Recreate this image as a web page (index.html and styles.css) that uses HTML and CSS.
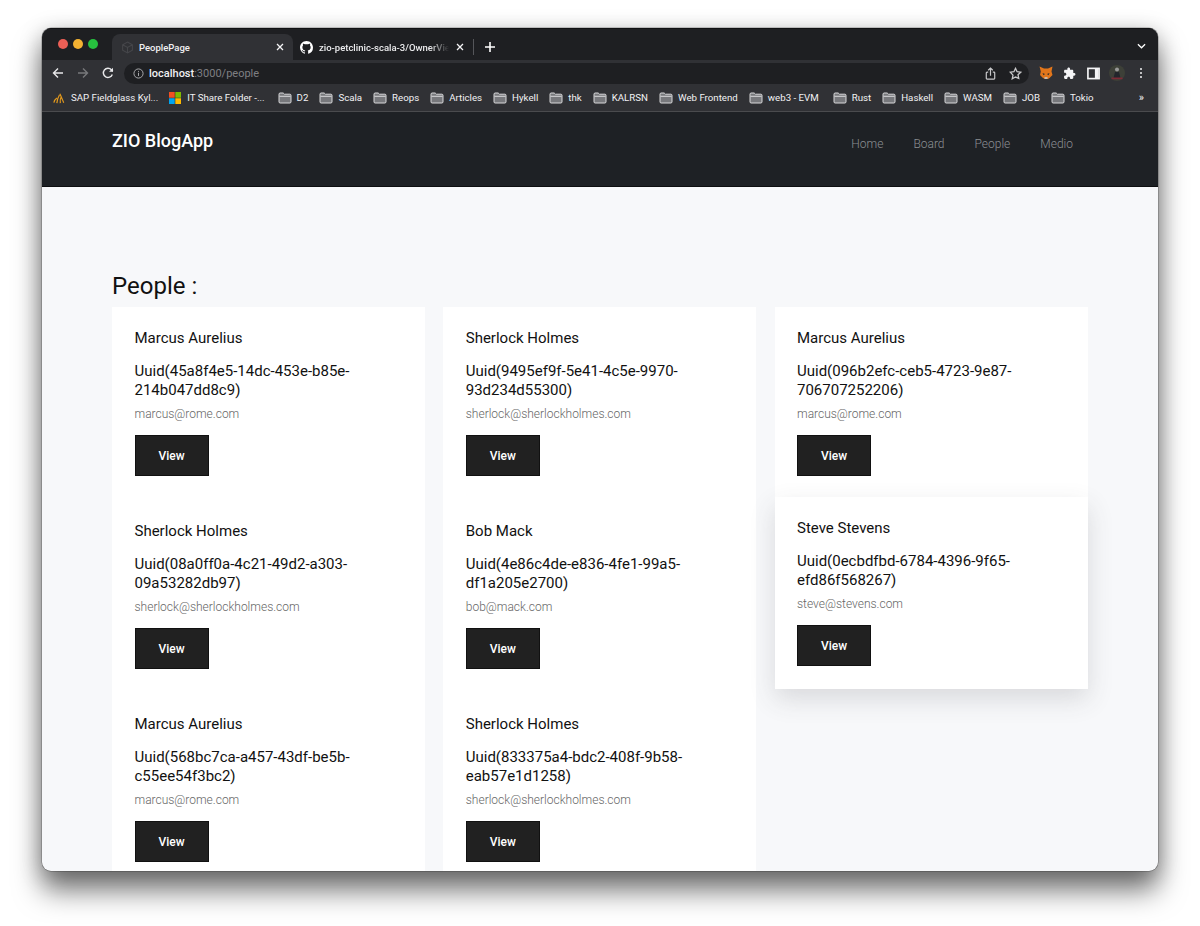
FILE: index.html
```html
<!DOCTYPE html>
<html lang="en">
<head>
<meta charset="utf-8">
<title>PeoplePage</title>
<link rel="stylesheet" href="styles.css">
</head>
<body>
<svg class="defs" width="0" height="0" aria-hidden="true">
  <symbol id="folder" viewBox="0 0 14 12">
    <path d="M1 2.200C1 1.500 1.400 1 2.100 1h3.100l1.200 1.200h5.500c.7 0 1.100.4 1.100 1.100v6.600c0 .7-.4 1.100-1.100 1.100H2.100C1.400 11 1 10.600 1 9.900z" fill="#77787c" stroke="#d9d9db" stroke-width="1"/>
    <path d="M1.500 4.300h11" stroke="#d9d9db" stroke-width="1"/>
  </symbol>
  <symbol id="close" viewBox="0 0 8 8">
    <path d="M1 1l6 6M7 1L1 7" stroke="#f4f4f6" stroke-width="1.300"/>
  </symbol>
</svg>
<div class="window">
  <div class="tabstrip">
    <div class="lights"><span class="light red"></span><span class="light yellow"></span><span class="light green"></span></div>
    <div class="tab active">
      <svg class="favicon" viewBox="0 0 12 12"><path d="M6 1l4.500 2.500v5L6 11 1.500 8.500v-5zM1.500 3.500L6 6l4.500-2.500M6 6v5" fill="none" stroke="#45464a" stroke-width="1"/></svg>
      <span class="tab-title">PeoplePage</span>
      <svg class="tab-close"><use href="#close"/></svg>
    </div>
    <div class="tab">
      <svg class="favicon gh" viewBox="0 0 16 16"><path fill="#fff" d="M8 0C3.580 0 0 3.580 0 8c0 3.540 2.290 6.530 5.470 7.590.4.070.55-.17.55-.38 0-.19-.01-.82-.01-1.490-2.010.37-2.530-.49-2.690-.94-.09-.23-.48-.94-.82-1.130-.28-.15-.68-.52-.01-.53.63-.01 1.080.58 1.230.82.720 1.210 1.870.87 2.330.66.070-.52.280-.87.510-1.070-1.780-.2-3.640-.89-3.640-3.950 0-.87.310-1.590.820-2.150-.08-.2-.36-1.020.08-2.120 0 0 .67-.21 2.200.82.640-.18 1.320-.27 2-.27s1.360.09 2 .27c1.530-1.040 2.200-.82 2.200-.82.440 1.100.16 1.920.08 2.120.51.560.82 1.270.82 2.150 0 3.070-1.870 3.750-3.650 3.950.29.25.54.73.54 1.480 0 1.070-.01 1.930-.01 2.200 0 .21.150.46.550.38A8.010 8.010 0 0 0 16 8c0-4.420-3.580-8-8-8z"/></svg>
      <span class="tab-title fade">zio-petclinic-scala-3/OwnerView</span>
      <svg class="tab-close"><use href="#close"/></svg>
    </div>
    <span class="tab-sep"></span>
    <svg class="plus" viewBox="0 0 10 10"><path d="M5 0v10M0 5h10" stroke="#fff" stroke-width="1.600"/></svg>
    <svg class="chev" viewBox="0 0 10 6"><path d="M1 1l4 4 4-4" fill="none" stroke="#fff" stroke-width="1.400"/></svg>
  </div>
  <div class="toolbar">
    <svg class="nav-ic" viewBox="0 0 12 12"><path d="M11 6H1.500M6 1.500L1.500 6 6 10.500" fill="none" stroke="#e8e8ea" stroke-width="1.400"/></svg>
    <svg class="nav-ic" viewBox="0 0 12 12"><path d="M1 6h9.500M6 1.500L10.500 6 6 10.500" fill="none" stroke="#77787b" stroke-width="1.400"/></svg>
    <svg class="nav-ic" viewBox="0 0 12 12"><path d="M10.300 7.500A4.600 4.600 0 1 1 9.400 2.800L10.800 4.200" fill="none" stroke="#e8e8ea" stroke-width="1.400"/><path d="M11 .8v4H7z" fill="#e8e8ea"/></svg>
    <div class="omnibox">
      <svg class="info" viewBox="0 0 12 12"><circle cx="6" cy="6" r="5" fill="none" stroke="#b5b6b8" stroke-width="1"/><path d="M6 5.200v3.500M6 3.200v1" stroke="#b5b6b8" stroke-width="1"/></svg>
      <span class="url"><b>localhost</b>:3000/people</span>
      <svg class="omni-ic share" viewBox="0 0 12 14"><path d="M3.500 5.500H2.200c-.5 0-.8.3-.8.8v6c0 .5.3.8.8.8h7.600c.5 0 .8-.3.8-.8v-6c0-.5-.3-.8-.8-.8H8.500M6 9.500V1.200M3.500 3.500L6 1l2.500 2.500" fill="none" stroke="#c8c8ca" stroke-width="1.300"/></svg>
      <svg class="omni-ic star" viewBox="0 0 14 14"><path d="M7 1.500l1.700 3.600 3.900.5-2.900 2.700.8 3.900L7 10.800l-3.500 1.900.8-3.900L1.400 5.600l3.900-.5z" fill="none" stroke="#c8c8ca" stroke-width="1.400"/></svg>
    </div>
    <div class="ext">
      <svg class="ext-ic fox" viewBox="0 0 14 14"><path d="M.5.5l4.500 2h4l4.500-2-1 5 1 3.500-3 3-1.500 1h-3L4 12 1 9l.8-3.500z" fill="#e2761b"/><path d="M3.500 7l2.500 1-1.500 1.200zM10.500 7L8 8l1.500 1.200z" fill="#2d2d2d"/><path d="M5.500 11h3v2h-3z" fill="#c9b8a8"/></svg>
      <svg class="ext-ic" viewBox="0 0 24 24"><path fill="#f4f4f6" d="M20.500 11H19V7c0-1.100-.9-2-2-2h-4V3.500C13 2.120 11.880 1 10.500 1S8 2.120 8 3.500V5H4c-1.100 0-1.990.9-1.990 2v3.800H3.500c1.490 0 2.700 1.210 2.700 2.700s-1.210 2.700-2.700 2.700H2V20c0 1.100.9 2 2 2h3.800v-1.500c0-1.490 1.210-2.700 2.700-2.700 1.490 0 2.700 1.210 2.700 2.700V22H17c1.100 0 2-.9 2-2v-4h1.500c1.380 0 2.500-1.120 2.500-2.500S21.880 11 20.500 11z"/></svg>
      <svg class="ext-ic" viewBox="0 0 14 14"><rect x="1" y="1.500" width="12" height="11" fill="none" stroke="#f4f4f6" stroke-width="1.800"/><rect x="8.500" y="2" width="4" height="10" fill="#f4f4f6"/></svg>
      <svg class="avatar" viewBox="0 0 16 16"><circle cx="8" cy="8" r="8" fill="#3d4038"/><circle cx="8" cy="4.500" r="2" fill="#999"/><path d="M4.500 13l1.500-6h4l1.500 6z" fill="#23252b"/><path d="M2.500 12.500h11v1.800h-11z" fill="#7d2b36"/></svg>
      <span class="kebab"><i></i><i></i><i></i></span>
    </div>
  </div>
  <div class="bookmarks">
    <div class="bm first">
      <svg class="bm-logo" viewBox="0 0 14 14"><path d="M1 12.500C1.500 10 3 8 4.500 7M4.500 13C5 9 6 6 7.500 3.500M8.500 13C8.200 10 8.400 7.500 9.500 6M12.500 12.500C11 9 9.500 5 8 2" fill="none" stroke="#e59a1c" stroke-width="1.400"/></svg>
      <span>SAP Fieldglass Kyl...</span>
    </div>
    <div class="bm second">
      <svg class="bm-logo" viewBox="0 0 12 12"><path fill="#f25022" d="M0 0h5.700v5.700H0z"/><path fill="#7fba00" d="M6.300 0H12v5.700H6.300z"/><path fill="#00a4ef" d="M0 6.300h5.700V12H0z"/><path fill="#ffb900" d="M6.300 6.300H12V12H6.300z"/></svg>
      <span>IT Share Folder -...</span>
    </div>
    <div class="bm"><svg class="folder"><use href="#folder"/></svg><span>D2</span></div>
    <div class="bm"><svg class="folder"><use href="#folder"/></svg><span>Scala</span></div>
    <div class="bm"><svg class="folder"><use href="#folder"/></svg><span>Reops</span></div>
    <div class="bm"><svg class="folder"><use href="#folder"/></svg><span>Articles</span></div>
    <div class="bm"><svg class="folder"><use href="#folder"/></svg><span>Hykell</span></div>
    <div class="bm"><svg class="folder"><use href="#folder"/></svg><span>thk</span></div>
    <div class="bm"><svg class="folder"><use href="#folder"/></svg><span>KALRSN</span></div>
    <div class="bm"><svg class="folder"><use href="#folder"/></svg><span>Web Frontend</span></div>
    <div class="bm wide"><svg class="folder"><use href="#folder"/></svg><span>web3 - EVM</span></div>
    <div class="bm"><svg class="folder"><use href="#folder"/></svg><span>Rust</span></div>
    <div class="bm"><svg class="folder"><use href="#folder"/></svg><span>Haskell</span></div>
    <div class="bm"><svg class="folder"><use href="#folder"/></svg><span>WASM</span></div>
    <div class="bm"><svg class="folder"><use href="#folder"/></svg><span>JOB</span></div>
    <div class="bm"><svg class="folder"><use href="#folder"/></svg><span>Tokio</span></div>
    <span class="more">»</span>
  </div>
  <header class="site-nav">
    <a class="brand">ZIO BlogApp</a>
    <nav class="links"><a>Home</a><a>Board</a><a>People</a><a>Medio</a></nav>
  </header>
  <main class="content">
    <h1 class="title">People :</h1>
    <div class="grid">
      <div class="col">
        <article class="card"><h3>Marcus Aurelius</h3><p class="id">Uuid(45a8f4e5-14dc-453e-b85e-214b047dd8c9)</p><p class="mail">marcus@rome.com</p><a class="btn">View</a></article>
        <article class="card"><h3>Sherlock Holmes</h3><p class="id">Uuid(08a0ff0a-4c21-49d2-a303-09a53282db97)</p><p class="mail">sherlock@sherlockholmes.com</p><a class="btn">View</a></article>
        <article class="card"><h3>Marcus Aurelius</h3><p class="id">Uuid(568bc7ca-a457-43df-be5b-c55ee54f3bc2)</p><p class="mail">marcus@rome.com</p><a class="btn">View</a></article>
      </div>
      <div class="col">
        <article class="card"><h3>Sherlock Holmes</h3><p class="id">Uuid(9495ef9f-5e41-4c5e-9970-93d234d55300)</p><p class="mail">sherlock@sherlockholmes.com</p><a class="btn">View</a></article>
        <article class="card"><h3>Bob Mack</h3><p class="id">Uuid(4e86c4de-e836-4fe1-99a5-df1a205e2700)</p><p class="mail">bob@mack.com</p><a class="btn">View</a></article>
        <article class="card"><h3>Sherlock Holmes</h3><p class="id">Uuid(833375a4-bdc2-408f-9b58-eab57e1d1258)</p><p class="mail">sherlock@sherlockholmes.com</p><a class="btn">View</a></article>
      </div>
      <div class="col">
        <article class="card"><h3>Marcus Aurelius</h3><p class="id">Uuid(096b2efc-ceb5-4723-9e87-706707252206)</p><p class="mail">marcus@rome.com</p><a class="btn">View</a></article>
        <article class="card hover"><h3>Steve Stevens</h3><p class="id">Uuid(0ecbdfbd-6784-4396-9f65-efd86f568267)</p><p class="mail">steve@stevens.com</p><a class="btn">View</a></article>
      </div>
    </div>
  </main>
</div>
</body>
</html>
```
FILE: styles.css
```css
* { box-sizing: border-box; }
html, body { margin: 0; height: 926px; overflow: hidden; }
body { background: #fff; padding: 28px 42px 0; font-family: Roboto, "Liberation Sans", sans-serif; }
.defs { display: block; height: 0; }

.window {
  height: 843px;
  border-radius: 9px;
  overflow: hidden;
  display: flex;
  flex-direction: column;
  background: #f7f8fa;
  box-shadow: 0 0 0 .5px rgba(0,0,0,.35), 0 20px 28px rgba(0,0,0,.5), 0 4px 22px rgba(0,0,0,.26);
}

.tabstrip { height: 32px; flex: none; background: #1e1f22; display: flex; align-items: flex-end; position: relative; border-top: 1px solid #101113; }
.lights { width: 70px; height: 31px; flex: none; display: flex; align-items: center; gap: 5.300px; padding: 0 0 2px 15.500px; }
.light { width: 10px; height: 10px; border-radius: 50%; }
.red { background: #ec5f56; }
.yellow { background: #f4b232; }
.green { background: #27c13f; }
.tab { width: 181px; height: 26px; flex: none; display: flex; align-items: center; padding: 0 9px; border-radius: 8px 8px 0 0; font-size: 9.500px; font-weight: 500; color: #f0f0f2; }
.tab.active { background: #303135; }
.tab + .tab { width: 180px; padding-left: 7px; }
.favicon { width: 13px; height: 13px; flex: none; margin-right: 5px; }
.gh { margin-right: 6px; }
.tab-title { flex: 1; min-width: 0; white-space: nowrap; overflow: hidden; }
.fade { color: #ececee; -webkit-mask-image: linear-gradient(90deg,#000 85%,transparent); mask-image: linear-gradient(90deg,#000 85%,transparent); }
.tab-close { width: 8px; height: 8px; flex: none; margin-left: 7px; }
.tab-sep { width: 1px; height: 16px; background: #55565a; margin: 0 0 5px 0; flex: none; }
.plus { width: 10px; height: 10px; margin: 0 0 8px 11px; flex: none; }
.chev { width: 9px; height: 6px; margin: 0 12px 11px auto; flex: none; }

.toolbar { height: 26px; flex: none; background: #303135; display: flex; align-items: center; padding: 0 0 0 10px; }
.nav-ic { width: 12px; height: 12px; flex: none; margin-right: 13px; }
.nav-ic:nth-of-type(3) { margin-right: 10px; }
.omnibox { width: 905px; height: 21px; flex: none; border-radius: 11px; background: #1e1f22; display: flex; align-items: center; padding: 0 7px 0 9px; }
.info { width: 11px; height: 11px; flex: none; margin-right: 5px; }
.url { flex: 1; font-size: 11px; font-weight: 400; color: #7e7f83; }
.url b { font-weight: 500; color: #f0f0f2; }
.omni-ic { flex: none; }
.share { width: 11px; height: 13px; margin-right: 13px; }
.star { width: 13px; height: 13px; }
.ext { display: flex; align-items: center; margin-left: 10px; }
.ext-ic { width: 13px; height: 13px; flex: none; margin-right: 11px; }
.fox { width: 14px; height: 14px; margin-right: 10px; }
.avatar { width: 16px; height: 16px; flex: none; margin-right: 15px; margin-left: -2px; }
.kebab { display: flex; flex-direction: column; gap: 2px; }
.kebab i { width: 2px; height: 2px; background: #f0f0f2; border-radius: 50%; display: block; }

.bookmarks { height: 26px; flex: none; background: #303135; border-bottom: 1px solid #4a4b4e; display: flex; align-items: center; padding: 0 0 2px 11px; font-size: 9.700px; font-weight: 450; color: #f2f2f4; position: relative; }
.bm { display: flex; align-items: center; flex: none; margin-right: 11px; white-space: nowrap; }
.bm-logo { width: 12px; height: 12px; flex: none; margin-right: 6px; }
.first { margin-right: 11px; }
.second { margin-right: 13px; }
.wide { margin-right: 14px; }
.folder { width: 14px; height: 12px; flex: none; margin-right: 5px; }
.more { margin-left: auto; margin-right: 14px; font-size: 11px; }

.site-nav { height: 75px; flex: none; background: #1e2125; display: flex; justify-content: space-between; padding: 0 70px; border-bottom: 1px solid #0d0e10; }
.brand { font-size: 18px; font-weight: 500; color: #fff; padding-top: 18px; }
.links { display: flex; gap: 30px; font-size: 12px; font-weight: 300; color: #8c8f93; padding: 25px 15px 0 0; }

.content { flex: 1; min-height: 0; overflow: hidden; padding: 85px 70px 0; }
.title { margin: 0 0 7px; font-size: 24px; line-height: 28px; font-weight: 400; color: #111; }
.grid { display: grid; grid-template-columns: repeat(3, 313px); column-gap: 18.250px; align-items: start; }
.col { display: flex; flex-direction: column; }
.card { height: 193px; background: #fff; padding: 22px 22.500px 0; }
.card h3 { margin: 0 0 15px; font-size: 15px; line-height: 18px; font-weight: 400; color: #111; }
.id { margin: 0 0 7px; font-size: 15px; line-height: 19px; color: #111; }
.mail { margin: 0 0 13px; font-size: 12px; line-height: 15px; font-weight: 300; color: #666; }
.btn { display: flex; align-items: center; justify-content: center; width: 74px; height: 41px; background: #212121; border: 1px solid #111; color: #fff; font-size: 12px; font-weight: 500; }
.hover { height: 192px; margin-top: -3px; position: relative; box-shadow: 0 10px 24px rgba(60,60,70,.16); }
```
